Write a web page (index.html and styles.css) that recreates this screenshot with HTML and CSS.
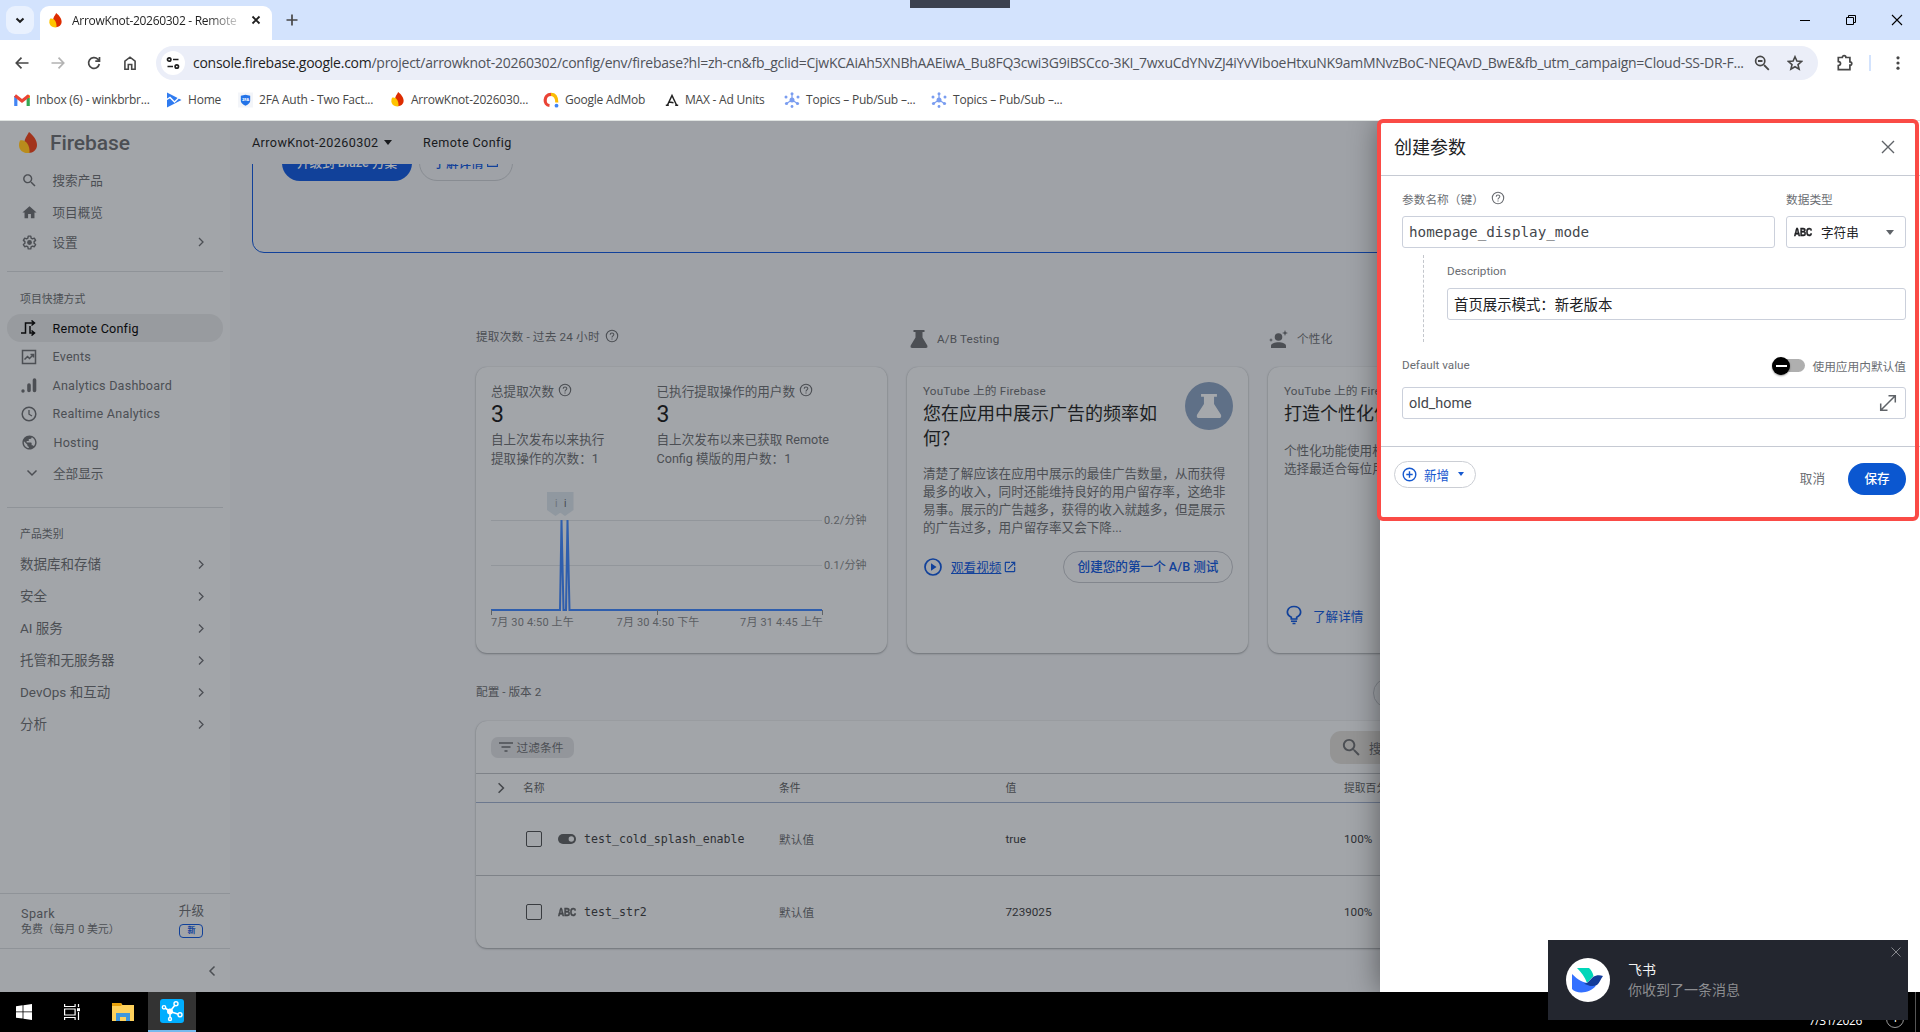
FILE: index.html
```html
<!DOCTYPE html>
<html lang="zh-CN">
<head>
    <meta charset="UTF-8">
    <meta name="viewport" content="width=device-width, initial-scale=1.0">
    <title>ArrowKnot-20260302 - Remote Config</title>
    <link rel="stylesheet" href="styles.css">
</head>
<body>
    <!-- shared icons -->
    <svg class="defs" width="0" height="0">
        <symbol id="flame" viewBox="0 0 18 22">
            <path d="M10 0C14 3.500 18 7.500 18 13c0 4.500-3.700 8-8.500 8C6 19 5 15 5.200 11 5.500 6.500 8 4 10 0Z" fill="var(--flame-b)"/>
            <path d="M1 8.500C6 7 11 12 10.500 20.900 5 22 0 18.500 0 13.500 0 11.500 .3 10 1 8.500Z" fill="var(--flame-a)"/>
        </symbol>
        <symbol id="chevron" viewBox="0 0 10 10">
            <path d="M3 1l4 4-4 4" fill="none" stroke="currentColor" stroke-width="1.300"/>
        </symbol>
        <symbol id="help" viewBox="0 0 14 14">
            <circle cx="7" cy="7" r="5.700" fill="none" stroke="currentColor" stroke-width="1.100"/>
            <path d="M5.200 5.700C5.200 3.500 8.800 3.500 8.800 5.600 8.800 6.800 7 7 7 8.400M7 9.400v1.200" fill="none" stroke="currentColor" stroke-width="1.100"/>
        </symbol>
        <symbol id="search" viewBox="0 0 24 24">
            <path d="M15.500 14h-.79l-.28-.27C15.410 12.590 16 11.110 16 9.500 16 5.910 13.090 3 9.500 3S3 5.910 3 9.500 5.910 16 9.500 16c1.610 0 3.090-.59 4.230-1.570l.27.28v.79l5 4.990L20.490 19l-4.990-5zm-6 0C7.010 14 5 11.990 5 9.500S7.010 5 9.500 5 14 7.010 14 9.500 11.990 14 9.500 14z" fill="currentColor"/>
        </symbol>
        <symbol id="flask" viewBox="0 0 18 18">
            <path d="M3.500 0h11v2h-2v5.500L17.300 15.500Q18 18 15.800 18H2.200Q0 18 .7 15.500L5.500 7.500V2h-2Z" fill="currentColor"/>
        </symbol>
        <symbol id="pubsub" viewBox="0 0 16 16">
            <g fill="#7a9df0"><circle cx="8" cy="8" r="2.500"/><circle cx="8" cy="1.700" r="1.500"/><circle cx="2" cy="5" r="1.500"/><circle cx="14" cy="5" r="1.500"/><circle cx="2.500" cy="11.500" r="1.600"/><circle cx="13.500" cy="11.500" r="1.600"/><circle cx="8" cy="14.500" r="1.400"/></g>
            <path d="M8 8V3M8 8l-5.500 3.500M8 8l5.500 3.500" stroke="#7a9df0" stroke-width="1.200"/>
        </symbol>
    </svg>

    <header class="browser">
        <div class="tabstrip">
            <button class="tab-search"><svg width="10" height="10" viewBox="0 0 10 10"><path d="M1.500 3.500L5 6.800l3.500-3.300" fill="none" stroke="#1f1f1f" stroke-width="2"/></svg></button>
            <div class="tab">
                <svg class="tab-icon" width="13" height="15"><use href="#flame"/></svg>
                <span class="tab-title">ArrowKnot-20260302 - Remote</span>
                <svg width="10" height="10" viewBox="0 0 10 10"><path d="M1.500 1.500l7 7M8.500 1.500l-7 7" stroke="#1f1f1f" stroke-width="1.800"/></svg>
            </div>
            <svg class="new-tab" width="12" height="12" viewBox="0 0 12 12"><path d="M6 .5v11M.5 6h11" stroke="#474747" stroke-width="1.700"/></svg>
            <div class="window-controls">
                <svg width="12" height="12" viewBox="0 0 12 12"><path d="M1 6.500h10" stroke="#000"/></svg>
                <svg width="12" height="12" viewBox="0 0 12 12"><path d="M1.500 3.500h7v7h-7zM3.500 3.500v-2h7v7h-2" fill="none" stroke="#000"/></svg>
                <svg width="12" height="12" viewBox="0 0 12 12"><path d="M1 1l10 10M11 1L1 11" stroke="#000" stroke-width="1.100"/></svg>
            </div>
            <div class="screen-handle"></div>
        </div>
        <div class="toolbar">
            <div class="nav-buttons">
                <svg width="16" height="16" viewBox="0 0 16 16"><path d="M14.500 8H2.500M7.500 2.700L2.300 8l5.200 5.300" fill="none" stroke="#474747" stroke-width="1.700"/></svg>
                <svg width="16" height="16" viewBox="0 0 16 16"><path d="M1.500 8h12M8.500 2.700L13.700 8l-5.200 5.300" fill="none" stroke="#b3b3b3" stroke-width="1.700"/></svg>
                <svg width="16" height="16" viewBox="0 0 16 16"><path d="M13.300 9A5.400 5.400 0 1 1 11.800 4.100L13.300 5.500M13.500 2v4.200H9.300" fill="none" stroke="#474747" stroke-width="1.700"/></svg>
                <svg width="16" height="16" viewBox="0 0 16 16"><path d="M2.900 14.200V6.200L8 2.200l5.100 4v8H9.700V9.500H6.300v4.700Z" fill="none" stroke="#474747" stroke-width="1.600"/></svg>
            </div>
            <div class="omnibox">
                <span class="site-info"><svg width="14" height="14" viewBox="0 0 14 14"><g fill="none" stroke="#1f1f1f" stroke-width="1.700"><circle cx="3.200" cy="3.500" r="1.700"/><path d="M7 3.500h5.500M1.500 10.500H7"/><circle cx="10.800" cy="10.500" r="1.700"/></g></svg></span>
                <span class="url"><b>console.firebase.google.com</b>/project/arrowknot-20260302/config/env/firebase?hl=zh-cn&amp;fb_gclid=CjwKCAiAh5XNBhAAEiwA_Bu8FQ3cwi3G9iBSCco-3KI_7wxuCdYNvZJ4iYvViboeHtxuNK9amMNvzBoC-NEQAvD_BwE&amp;fb_utm_campaign=Cloud-SS-DR-F...</span>
                <span class="omnibox-actions">
                    <svg width="16" height="16" viewBox="0 0 16 16"><path d="M10 10l4.800 4.800M4 6h4.500" stroke="#474747" stroke-width="1.800"/><circle cx="6.200" cy="6" r="4.600" fill="none" stroke="#474747" stroke-width="1.700"/></svg>
                    <svg width="16" height="16" viewBox="0 0 16 16"><path d="M8 1.800l1.900 4.300 4.600.4-3.500 3.100 1.100 4.600L8 11.800l-4.100 2.400L5 9.600 1.500 6.500l4.600-.4Z" fill="none" stroke="#474747" stroke-width="1.600"/></svg>
                </span>
            </div>
            <svg class="extensions" width="18" height="18" viewBox="0 0 18 18"><path d="M2.300 3.500h4c0-2.500 3.600-2.500 3.600 0h4v4.300c2.500 0 2.500 3.400 0 3.400v4.500H2.300v-4.200c3-.3 3-3.600 0-3.900Z" fill="none" stroke="#474747" stroke-width="1.700"/></svg>
            <span class="toolbar-divider"></span>
            <svg width="16" height="16" viewBox="0 0 16 16"><g fill="#474747"><circle cx="8" cy="2.800" r="1.600"/><circle cx="8" cy="8" r="1.600"/><circle cx="8" cy="13.200" r="1.600"/></g></svg>
        </div>
        <nav class="bookmarks">
            <a><svg width="16" height="16" viewBox="0 0 16 16"><path d="M1.800 14V4" stroke="#4285f4" stroke-width="3.200"/><path d="M14.200 14V4" stroke="#34a853" stroke-width="3.200"/><path d="M14.200 6V3" stroke="#fbbc04" stroke-width="3.200"/><path d="M1 3.500l7 5.500 7-5.500" fill="none" stroke="#ea4335" stroke-width="3.200"/></svg>Inbox (6) - winkbrbr...</a>
            <a><svg width="16" height="16" viewBox="0 0 16 16"><path d="M1 .5L15.500 8 1 15.500Z" fill="#2f7bf0"/><path d="M0 8l4-2.500L8.500 10l4-4" fill="none" stroke="#fff" stroke-width="1.400"/></svg>Home</a>
            <a><svg width="15" height="16" viewBox="0 0 16 16"><path d="M0 0h16v16H0z" fill="#f3f5f9"/><path d="M3 3.500l5-1 5 1v5.500c0 2-2 3.700-5 5-3-1.300-5-3-5-5Z" fill="#2373e8"/><text x="8" y="9.500" font-size="4.500" font-weight="bold" text-anchor="middle" fill="#fff">2FA</text></svg>2FA Auth - Two Fact...</a>
            <a><svg width="15" height="15"><use href="#flame"/></svg>ArrowKnot-2026030...</a>
            <a><svg width="16" height="16" viewBox="0 0 16 16"><path d="M6.500 13.500C.5 13 .5 2.500 8 2.300" fill="none" stroke="#ea4335" stroke-width="3.200"/><path d="M8 2.300C12 2.300 13.800 5 13.800 10.500" fill="none" stroke="#fbbc04" stroke-width="3.200"/><circle cx="13.500" cy="13.700" r="1.900" fill="#4285f4"/></svg>Google AdMob</a>
            <a><svg width="14" height="14" viewBox="0 0 14 14"><path d="M2.500 12L7 2.500 11.500 12M4.500 9l4 .8M.8 12.300h3M10.200 12.300h3" fill="none" stroke="#222" stroke-width="1.500"/></svg>MAX - Ad Units</a>
            <a><svg width="16" height="16"><use href="#pubsub"/></svg>Topics – Pub/Sub –...</a>
            <a><svg width="16" height="16"><use href="#pubsub"/></svg>Topics – Pub/Sub –...</a>
        </nav>
    </header>

    <div class="page">
        <aside class="sidebar">
            <div class="brand"><svg width="18" height="22"><use href="#flame"/></svg>Firebase</div>
            <a class="nav-item tall"><svg width="17" height="17"><use href="#search"/></svg><span>搜索产品</span></a>
            <a class="nav-item tall overview"><svg width="17" height="17" viewBox="0 0 24 24"><path d="M10 20v-6h4v6h5v-8h3L12 3 2 12h3v8z" fill="currentColor"/></svg><span>项目概览</span></a>
            <a class="nav-item tall"><svg width="17" height="17" viewBox="0 0 24 24"><path d="M10.200 3h3.600l.5 2.700 1.900 1.100 2.600-.9 1.800 3.100-2.100 1.800v2.300l2.100 1.800-1.800 3.100-2.600-.9-1.900 1.100-.5 2.800h-3.600l-.5-2.800-1.900-1.100-2.600.9-1.800-3.100 2.100-1.800v-2.300L3.400 9l1.800-3.100 2.600.9 1.900-1.100Z" fill="none" stroke="currentColor" stroke-width="2" stroke-linejoin="round"/><circle cx="12" cy="12" r="3.400" fill="currentColor"/></svg><span>设置</span><svg class="more" width="10" height="10"><use href="#chevron"/></svg></a>
            <hr>
            <div class="nav-label">项目快捷方式</div>
            <div class="nav-group">
                <a class="nav-item active"><svg width="16" height="16" viewBox="0 0 16 16"><path d="M0 13h4.500V3H14M10.500 .5L13.500 3l-3 2.500M9 6v7h5M10.500 10.500l3 2.500-3 2.500" fill="none" stroke="currentColor" stroke-width="1.500"/></svg>Remote Config</a>
                <a class="nav-item"><svg width="16" height="16" viewBox="0 0 16 16"><path d="M1.500 1.500h13v13h-13zM3.500 10.500l3-3 2 2 4-4M9.500 5.500h3v3" fill="none" stroke="currentColor" stroke-width="1.500"/></svg>Events</a>
                <a class="nav-item"><svg width="16" height="16" viewBox="0 0 16 16"><circle cx="2" cy="14" r="1.700" fill="currentColor"/><path d="M8 13.500V8M13.500 13.500V3" stroke="currentColor" stroke-width="3.600" stroke-linecap="round"/></svg>Analytics Dashboard</a>
                <a class="nav-item"><svg width="16" height="16" viewBox="0 0 16 16"><circle cx="8" cy="8" r="6.800" fill="none" stroke="currentColor" stroke-width="1.500"/><path d="M8 4v4.200l3 1.800" fill="none" stroke="currentColor" stroke-width="1.300"/></svg>Realtime Analytics</a>
                <a class="nav-item"><svg width="17" height="17" viewBox="0 0 24 24"><path d="M12 2C6.480 2 2 6.480 2 12s4.480 10 10 10 10-4.480 10-10S17.520 2 12 2zm-1 17.930c-3.950-.49-7-3.850-7-7.930 0-.62.08-1.210.21-1.790L9 15v1c0 1.100.9 2 2 2v1.930zm6.900-2.540c-.26-.81-1-1.390-1.900-1.390h-1v-3c0-.55-.45-1-1-1H8v-2h2c.55 0 1-.45 1-1V7h2c1.100 0 2-.9 2-2v-.41c2.930 1.190 5 4.060 5 7.410 0 2.080-.8 3.970-2.100 5.390z" fill="currentColor"/></svg>Hosting</a>
                <a class="nav-item show-all"><svg width="12" height="12" viewBox="0 0 12 12"><path d="M1.500 3.500L6 8l4.500-4.500" fill="none" stroke="currentColor" stroke-width="1.500"/></svg>全部显示</a>
            </div>
            <hr class="second">
            <div class="nav-label products">产品类别</div>
            <div class="categories">
                <a><span>数据库和存储</span><svg width="10" height="11"><use href="#chevron"/></svg></a>
                <a><span>安全</span><svg width="10" height="11"><use href="#chevron"/></svg></a>
                <a><span>AI 服务</span><svg width="10" height="11"><use href="#chevron"/></svg></a>
                <a><span>托管和无服务器</span><svg width="10" height="11"><use href="#chevron"/></svg></a>
                <a><span>DevOps 和互动</span><svg width="10" height="11"><use href="#chevron"/></svg></a>
                <a><span>分析</span><svg width="10" height="11"><use href="#chevron"/></svg></a>
            </div>
            <div class="plan">
                <div><div class="plan-name">Spark</div><div class="plan-price">免费（每月 0 美元）</div></div>
                <div class="upgrade">升级<span class="badge">新</span></div>
            </div>
            <div class="collapse"><svg width="8" height="12" viewBox="0 0 8 12"><path d="M6.500 1.500L2 6l4.500 4.500" fill="none" stroke="currentColor" stroke-width="1.500"/></svg></div>
        </aside>

        <main class="main">
            <div class="topbar">
                <span class="project">ArrowKnot-20260302</span>
                <span class="caret"></span>
                <span class="crumb">Remote Config</span>
            </div>
            <div class="scroll">
                <div class="banner">
                    <a class="pill primary">升级到 Blaze 方案</a>
                    <a class="pill outline">了解详情<svg width="13" height="13" viewBox="0 0 24 24"><path d="M3 3h18v18H3z" fill="none" stroke="currentColor" stroke-width="2"/></svg></a>
                </div>

                <div class="columns headings">
                    <div class="heading first">提取次数 - 过去 24 小时<svg width="14" height="14"><use href="#help"/></svg></div>
                    <div class="heading"><svg width="18" height="18"><use href="#flask"/></svg>A/B Testing</div>
                    <div class="heading"><svg width="19" height="18" viewBox="0 0 19 18"><circle cx="9.500" cy="7" r="3.800" fill="currentColor"/><path d="M2 18v-2c0-5 15-5 15 0v2ZM16 0l.8 2.200 2.200.8-2.200.8L16 6l-.8-2.200L13 3l2.200-.8ZM2 8l.6 1.500 1.400.5-1.400.5L2 12l-.6-1.500L0 10l1.400-.5Z" fill="currentColor"/></svg>个性化</div>
                </div>

                <div class="columns">
                    <section class="card fetches">
                        <div class="stats">
                            <div class="stat">
                                <div class="stat-title">总提取次数<svg width="14" height="14"><use href="#help"/></svg></div>
                                <div class="stat-value">3</div>
                                <div class="stat-note">自上次发布以来执行<br>提取操作的次数：1</div>
                            </div>
                            <div class="stat">
                                <div class="stat-title">已执行提取操作的用户数<svg width="14" height="14"><use href="#help"/></svg></div>
                                <div class="stat-value">3</div>
                                <div class="stat-note">自上次发布以来已获取 Remote<br>Config 模版的用户数：1</div>
                            </div>
                        </div>
                        <svg class="chart" width="384" height="140" viewBox="0 0 384 140">
                            <path d="M0 29.500h331M0 74.500h331" stroke="#92969b"/>
                            <path d="M56 1h17v18l-8.500 6L56 19Z" fill="#9098a0"/>
                            <path d="M65.500 1h17v18L74 25l-8.500-6Z" fill="#9098a0"/>
                            <text x="64" y="16" class="flag">i</text>
                            <text x="73" y="16" class="flag dark">i</text>
                            <path d="M0 119h69l1.500-90 2 90h2.500l1.500-90 2 90H331" fill="none" stroke="#2f5ead" stroke-width="2"/>
                            <path d="M.5 119v5M166.500 119v5M331.500 119v5" stroke="#5f6368"/>
                            <text x="333" y="33">0.2/分钟</text>
                            <text x="333" y="78">0.1/分钟</text>
                            <text x="0" y="135">7月 30 4:50 上午</text>
                            <text x="167" y="135" text-anchor="middle">7月 30 4:50 下午</text>
                            <text x="332" y="135" text-anchor="end">7月 31 4:45 上午</text>
                        </svg>
                    </section>
                    <section class="card promo">
                        <div class="promo-top">
                            <div>
                                <div class="eyebrow">YouTube 上的 Firebase</div>
                                <h2>您在应用中展示广告的频率如何？</h2>
                            </div>
                            <span class="promo-icon"><svg width="26" height="24" viewBox="0 0 18 18" preserveAspectRatio="none"><use href="#flask"/></svg></span>
                        </div>
                        <p>清楚了解应该在应用中展示的最佳广告数量，从而获得最多的收入，同时还能维持良好的用户留存率，这绝非易事。展示的广告越多，获得的收入就越多，但是展示的广告过多，用户留存率又会下降...</p>
                        <div class="promo-actions">
                            <a class="video"><svg width="18" height="18" viewBox="0 0 18 18"><circle cx="9" cy="9" r="8" fill="none" stroke="currentColor" stroke-width="1.700"/><path d="M7 5.300L12.500 9 7 12.700Z" fill="currentColor"/></svg><u>观看视频</u><svg class="external" width="14" height="14" viewBox="0 0 24 24"><path d="M19 19H5V5h7V3H5c-1.100 0-2 .9-2 2v14c0 1.100.9 2 2 2h14c1.100 0 2-.9 2-2v-7h-2v7zM14 3v2h3.590l-9.830 9.830 1.410 1.410L19 6.410V10h2V3h-7z" fill="currentColor"/></svg></a>
                            <a class="create">创建您的第一个 A/B 测试</a>
                        </div>
                    </section>
                    <section class="card promo personal">
                        <div class="eyebrow">YouTube 上的 Firebase</div>
                        <h2>打造个性化体</h2>
                        <p>个性化功能使用机<br>选择最适合每位用</p>
                        <a class="learn"><svg width="16" height="20" viewBox="0 0 16 20"><path d="M5.300 14v-1.700C-1.500 8.500 1.500 1.500 8 1.500S17.500 8.500 10.700 12.300V14Z" fill="none" stroke="currentColor" stroke-width="1.700"/><path d="M5 16.300h6M6.500 18.500h3" stroke="currentColor" stroke-width="1.500"/></svg>了解详情</a>
                    </section>
                </div>

                <div class="config-head"><span>配置 - 版本 2</span><span class="history"></span></div>

                <section class="card table">
                    <div class="filters">
                        <span class="chip"><svg width="14" height="10" viewBox="0 0 14 10"><path d="M0 1h14M2.500 5h9M5.500 9h3" stroke="currentColor" stroke-width="1.600"/></svg><span>过滤条件</span></span>
                        <span class="table-search"><svg width="23" height="23"><use href="#search"/></svg>搜索参数</span>
                    </div>
                    <div class="row head">
                        <span class="expand"><svg width="12" height="12"><use href="#chevron"/></svg></span>
                        <span>名称</span><span>条件</span><span>值</span><span>提取百分比</span>
                    </div>
                    <div class="row">
                        <span></span>
                        <span class="param"><i class="checkbox"></i><svg width="18" height="10" viewBox="0 0 18 10"><rect width="18" height="10" rx="5" fill="currentColor"/><circle cx="13.300" cy="5" r="2.700" fill="#a2a5a9"/></svg><code>test_cold_splash_enable</code></span>
                        <span class="muted">默认值</span><span>true</span><span>100%</span>
                    </div>
                    <div class="row">
                        <span></span>
                        <span class="param"><i class="checkbox"></i><b class="abc">ABC</b><code>test_str2</code></span>
                        <span class="muted">默认值</span><span>7239025</span><span>100%</span>
                    </div>
                </section>
            </div>
        </main>

        <aside class="drawer">
            <div class="drawer-head">
                <h1>创建参数</h1>
                <svg width="14" height="16" viewBox="0 0 14 16"><path d="M1 2l12 12M13 2L1 14" stroke="#5f6368" stroke-width="1.400"/></svg>
            </div>
            <div class="drawer-body">
                <div class="name-row">
                    <div class="field">
                        <label>参数名称（键）<svg width="14" height="14"><use href="#help"/></svg></label>
                        <div class="input mono">homepage_display_mode</div>
                    </div>
                    <div class="field">
                        <label>数据类型</label>
                        <div class="input select"><b class="abc">ABC</b><span>字符串</span><i class="caret"></i></div>
                    </div>
                </div>
                <div class="description">
                    <label>Description</label>
                    <div class="input">首页展示模式：新老版本</div>
                </div>
                <div class="default-head">
                    <label>Default value</label>
                    <span class="toggle"><i></i></span>
                    <label>使用应用内默认值</label>
                </div>
                <div class="input default">old_home<svg width="18" height="18" viewBox="0 0 18 18"><path d="M2 16L16 2M9.500 1.700h6.800v6.800M1.700 9.500v6.800h6.800" fill="none" stroke="#5f6368" stroke-width="1.500"/></svg></div>
            </div>
            <div class="drawer-foot">
                <a class="add"><svg width="15" height="15" viewBox="0 0 15 15"><circle cx="7.500" cy="7.500" r="6.300" fill="none" stroke="currentColor" stroke-width="1.400"/><path d="M7.500 4.300v6.400M4.300 7.500h6.400" stroke="currentColor" stroke-width="1.400"/></svg>新增<i class="caret"></i></a>
                <a class="cancel">取消</a>
                <a class="save">保存</a>
            </div>
        </aside>
    </div>

    <footer class="taskbar">
        <span class="task"><svg width="16" height="16" viewBox="0 0 16 16"><path d="M0 2.200L6.600 1.300v6.200H0ZM7.400 1.200L16 0v7.500H7.400ZM0 8.300h6.600v6.300L0 13.700ZM7.400 8.300H16V16l-8.600-1.200Z" fill="#fff"/></svg></span>
        <span class="task"><svg width="17" height="16" viewBox="0 0 17 16"><path d="M.6 0v2.500h10.500V0M.6 5h10.500v6H.6zM.6 16v-2.500h10.500V16M14.500 0v3M14.500 8v8" fill="none" stroke="#fff" stroke-width="1.200"/><path d="M13 4.200h3v3h-3z" fill="#fff"/></svg></span>
        <span class="task explorer"><svg width="22" height="18" viewBox="0 0 22 18"><path d="M0 0h9l1.500 2H22v16H0Z" fill="#fed15c"/><path d="M0 0h9l1 1.800L9 3H0Z" fill="#e8a20c"/><path d="M4 18v-8h14v8h-4v-4H8v4Z" fill="#3f97dc"/></svg></span>
        <span class="task current"><svg width="24" height="24" viewBox="0 0 24 24"><rect width="24" height="24" rx="3" fill="#00aeff"/><path d="M10 12.500L4.500 8.500M10 12.500L15.800 5M10 12.500l10 3.200M10 12.500V20" stroke="#fff" stroke-width="1.600"/><g fill="#00aeff" stroke="#fff" stroke-width="1.400"><circle cx="4" cy="8.300" r="1.700"/><circle cx="16" cy="4.800" r="2"/><circle cx="20" cy="15.800" r="2"/><circle cx="10" cy="20" r="1.500"/></g><circle cx="10" cy="12.500" r="3" fill="#fff"/></svg></span>
        <span class="clock">7/31/2026</span>
        <span class="notice">1</span>
        <span class="peek"></span>
    </footer>

    <div class="highlight"></div>
    <div class="toast">
        <span class="avatar"><svg width="32" height="26" viewBox="0 0 32 26"><path d="M5 1h12c2 1.500 4 5 4.500 8L15 16C13 10 9 5 5 1Z" fill="#00d6b9"/><path d="M0 7c6 6 11 8.500 18 9.500l6 2C18 27 4 27 0 22Z" fill="#3370ff"/><path d="M31 9c-3-1-7-1-10 1l-6 6-3 .5C16 19 21 20 25 18c2.500-2 3.500-6 6-9Z" fill="#133c9a"/></svg></span>
        <div>
            <div class="toast-title">飞书</div>
            <div class="toast-text">你收到了一条消息</div>
        </div>
        <svg class="toast-close" width="10" height="10" viewBox="0 0 10 10"><path d="M.5 .5l9 9M9.500 .5l-9 9" stroke="#85878c"/></svg>
    </div>
</body>
</html>
```
FILE: styles.css
```css
* {
    box-sizing: border-box;
}

body {
    --flame-a: #ffc400;
    --flame-b: #dd2c00;
    margin: 0;
    width: 1920px;
    height: 1032px;
    overflow: hidden;
    position: relative;
    font-family: Roboto, "Noto Sans CJK SC", sans-serif;
    font-size: 12.6px;
    background: #fff;
}

svg {
    flex: none;
}

.defs {
    position: absolute;
}

/* browser chrome */
.browser {
    height: 121px;
    font-family: "Open Sans", sans-serif;
    border-bottom: 1px solid #dfe3e1;
    background: #fff;
}

.tabstrip {
    position: relative;
    height: 40px;
    padding-left: 6px;
    display: flex;
    align-items: center;
    background: #d3e3fd;
}

.tab-search {
    width: 28px;
    height: 28px;
    padding: 0;
    border: 0;
    border-radius: 9px;
    background: #e9f1fe;
    display: flex;
    align-items: center;
    justify-content: center;
}

.tab {
    width: 232px;
    height: 34px;
    margin: 6px 0 0 6px;
    padding: 0 11px 6px 9px;
    border-radius: 9px 9px 0 0;
    background: #fff;
    display: flex;
    align-items: center;
}

.tab-icon {
    margin-right: 10px;
}

.tab-title {
    width: 165px;
    margin-right: 14px;
    font-size: 12px;
    letter-spacing: -0.3px;
    white-space: nowrap;
    overflow: hidden;
    background: linear-gradient(90deg, #1f1f1f 82%, #ccc);
    background-clip: text;
    color: transparent;
}

.new-tab {
    margin-left: 14px;
}

.window-controls {
    margin-left: auto;
    padding-right: 17px;
    display: flex;
    gap: 34px;
}

.screen-handle {
    position: absolute;
    left: 910px;
    top: 0;
    width: 100px;
    height: 8px;
    background: #3c4250;
}

.toolbar {
    height: 46px;
    padding: 0 14px;
    display: flex;
    align-items: center;
}

.nav-buttons {
    width: 142px;
    display: flex;
    gap: 20px;
}

.omnibox {
    width: 1662px;
    height: 34px;
    border-radius: 17px;
    background: #ebeef8;
    display: flex;
    align-items: center;
    padding-left: 5px;
}

.site-info {
    width: 24px;
    height: 24px;
    border-radius: 50%;
    background: #fff;
    display: flex;
    align-items: center;
    justify-content: center;
}

.url {
    margin-left: 8px;
    width: 1561px;
    padding-bottom: 1px;
    font-size: 14px;
    letter-spacing: -0.26px;
    white-space: nowrap;
    color: #50535a;
}

.url b {
    font-weight: normal;
    color: #1f1f1f;
}

.omnibox-actions {
    display: flex;
    gap: 17px;
}

.extensions {
    margin-left: 18px;
}

.toolbar-divider {
    width: 2px;
    height: 16px;
    margin: 0 19px 0 15px;
    background: #d3e3fd;
}

.bookmarks {
    height: 27px;
    padding-left: 14px;
    display: grid;
    grid-template-columns: 152px 72px 152px 153px 122px 119px 147px 147px;
    align-items: center;
    font-size: 12px;
    letter-spacing: -0.22px;
    color: #474747;
    white-space: nowrap;
}

.bookmarks a {
    display: flex;
    align-items: center;
    gap: 6px;
}

/* console page, under the scrim */
.page {
    --flame-a: #b98c1c;
    --flame-b: #a2341c;
    position: relative;
    height: 871px;
    display: flex;
    overflow: hidden;
    background: #9fa2a7;
    color: #4c4f54;
}

.sidebar {
    width: 230px;
    height: 871px;
    display: flex;
    flex-direction: column;
    background: #a2a5a9;
}

.sidebar hr {
    width: 216px;
    height: 1px;
    margin: 14px 7px 0;
    border: 0;
    background: #8f9398;
}

.sidebar hr.second {
    margin-top: 20px;
}

.brand {
    height: 44px;
    padding: 0 0 0 19px;
    display: flex;
    align-items: center;
    gap: 13px;
    font-size: 21px;
    font-weight: 500;
    letter-spacing: -0.1px;
}

.nav-item {
    height: 28px;
    margin: 0 7px;
    padding: 0 17px 0 14px;
    border-radius: 14px;
    display: flex;
    align-items: center;
    gap: 15.500px;
    letter-spacing: 0.22px;
}

.nav-item.tall {
    height: 30px;
    gap: 14.500px;
    letter-spacing: 0;
}

.nav-item span,
.categories span,
.chip span {
    padding-bottom: 2px;
}

.nav-item.overview {
    margin-top: 2px;
}

.nav-item .more {
    margin-left: auto;
}

.nav-item.active {
    background: #989b9f;
    color: #0b0c0e;
}

.nav-item.show-all {
    margin-top: 2px;
    padding-left: 19px;
    gap: 15px;
    letter-spacing: 0;
}

.nav-label {
    height: 20px;
    margin: 18px 0 4px 20px;
    line-height: 20px;
    font-size: 10.9px;
}

.nav-label.products {
    margin: 17px 0 3px 20px;
}

.nav-group {
    display: flex;
    flex-direction: column;
    gap: 0.6px;
}

.categories a {
    height: 32.1px;
    padding: 0 24px 0 20px;
    display: flex;
    align-items: center;
    justify-content: space-between;
    font-size: 13.5px;
}

.plan {
    height: 55px;
    margin-top: auto;
    padding: 11px 26px 0 21px;
    border-top: 1px solid #8f9398;
    display: flex;
    justify-content: space-between;
}

.plan-name {
    height: 18px;
    line-height: 18px;
    letter-spacing: 0.4px;
}

.plan-price {
    line-height: 14px;
    font-size: 10.9px;
    white-space: nowrap;
}

.upgrade {
    margin-top: -1px;
    display: flex;
    flex-direction: column;
    align-items: center;
    gap: 7px;
    line-height: 13px;
}

.badge {
    width: 24px;
    height: 14px;
    border: 1px solid #11419a;
    border-radius: 4px;
    line-height: 11px;
    font-size: 8px;
    font-weight: bold;
    text-align: center;
    color: #11419a;
}

.collapse {
    height: 44px;
    padding-right: 14px;
    border-top: 1px solid #8f9398;
    display: flex;
    align-items: center;
    justify-content: flex-end;
}

.main {
    width: 1150px;
    height: 871px;
    display: flex;
    flex-direction: column;
}

.topbar {
    height: 43px;
    padding-left: 22px;
    display: flex;
    align-items: center;
    color: #191b1e;
    letter-spacing: 0.4px;
}

.caret {
    width: 0;
    height: 0;
    border: 4px solid transparent;
    border-top: 5px solid currentColor;
    border-bottom: 0;
}

.topbar .caret {
    margin: 0 29px 0 5.500px;
}

.topbar .crumb {
    padding-left: 2px;
}

.scroll {
    flex: 1;
    overflow: hidden;
}

.banner {
    width: 1200px;
    height: 118px;
    margin: -29px 0 0 22px;
    padding: 9px 29px;
    border: 1px solid #11419a;
    border-radius: 0 0 12px 12px;
    display: flex;
    gap: 7px;
}

.pill {
    height: 36px;
    padding-bottom: 3px;
    border-radius: 18px;
    display: flex;
    align-items: center;
    justify-content: center;
    font-weight: 500;
    white-space: nowrap;
}

.pill.primary {
    width: 130px;
    background: #11419a;
    color: #a9acb0;
}

.pill.outline {
    width: 94px;
    gap: 2px;
    border: 1px solid #888c92;
    color: #11419a;
}

.columns {
    width: 1200px;
    padding-left: 246px;
    display: grid;
    grid-template-columns: 411px 341px 340px;
    gap: 20px;
}

.headings {
    padding-top: 75px;
}

.heading {
    height: 39px;
    padding: 4px 0 0 3px;
    display: flex;
    align-items: flex-start;
    gap: 9px;
    line-height: 16px;
    font-size: 11.7px;
    letter-spacing: 0.15px;
}

.heading.first {
    gap: 5px;
    padding: 1px 0 0;
    letter-spacing: 0.15px;
}

.heading:nth-child(2),
.heading:nth-child(3) {
    line-height: 18px;
    padding-top: 2px;
}

.heading:nth-child(3) {
    padding-left: 1px;
}

.card {
    height: 286px;
    border-radius: 11px;
    background: #a2a5a9;
    box-shadow: 0 1px 2px #6f7378, 0 0 1px #7f8388;
}

.fetches {
    padding: 13px 0 0 15px;
}

.stats {
    display: flex;
    height: 111px;
}

.stat {
    width: 165.500px;
    white-space: nowrap;
}

.stat-title {
    height: 20px;
    display: flex;
    align-items: center;
    gap: 4px;
}

.stat-value {
    height: 27px;
    line-height: 29px;
    font-size: 23px;
    font-weight: 400;
    color: #17191c;
}

.stat-note {
    padding-top: 3px;
    line-height: 19px;
}

.chart {
    display: block;
    font-size: 11px;
    letter-spacing: 0.15px;
    fill: #5a5d62;
}

.chart .flag {
    font-size: 10px;
    fill: #6b7178;
}

.chart .flag.dark {
    fill: #44494f;
}

.promo {
    padding: 14px 15px 0 16px;
}

.promo-top {
    display: flex;
    justify-content: space-between;
}

.eyebrow {
    height: 21px;
    line-height: 20px;
    font-size: 11.7px;
    letter-spacing: 0.2px;
}

.promo h2 {
    margin: 0;
    width: 240px;
    line-height: 24.500px;
    font-size: 18px;
    font-weight: 400;
    color: #1c1e22;
}

.promo-icon {
    width: 48px;
    height: 48px;
    margin-top: 1px;
    border-radius: 50%;
    background: #5f7087;
    color: #a5a8ac;
    display: flex;
    align-items: center;
    justify-content: center;
}

.promo p {
    margin: 14px 0 0;
    width: 305px;
    line-height: 18px;
    white-space: normal;
}

.promo-actions {
    height: 32px;
    margin-top: 14px;
    display: flex;
    align-items: center;
    justify-content: space-between;
    color: #11419a;
}

.video {
    padding-left: 1px;
    display: flex;
    align-items: center;
}

.video u {
    margin: 0 2px 1px 9px;
}

.create {
    width: 170px;
    height: 32px;
    border: 1px solid #82868d;
    border-radius: 16px;
    line-height: 30px;
    text-align: center;
    font-weight: 500;
    white-space: nowrap;
}

.personal h2 {
    height: 25px;
}

.personal p {
    margin-top: 15px;
}

.learn {
    margin-top: 127px;
    padding-left: 2px;
    display: flex;
    align-items: center;
    gap: 11px;
    color: #11419a;
}

.config-head {
    height: 68px;
    padding: 25px 0 0 246px;
    display: flex;
    line-height: 29px;
    font-size: 11.7px;
    white-space: nowrap;
}

.config-head span:first-child {
    width: 68px;
    flex: none;
}

.history {
    flex: none;
    width: 60px;
    height: 30px;
    margin-left: 829px;
    border: 1px solid #82868d;
    border-radius: 15px;
}

.table {
    width: 1200px;
    height: 227px;
    margin-left: 246px;
}

.filters {
    height: 52px;
    padding-left: 15px;
    display: flex;
    align-items: center;
}

.chip {
    width: 83px;
    height: 21px;
    border-radius: 7px;
    display: flex;
    align-items: center;
    justify-content: center;
    gap: 4px;
    padding-right: 3px;
    font-size: 11.7px;
    background: #93969b;
}

.table-search {
    width: 200px;
    height: 33px;
    margin-left: 756px;
    padding-left: 10px;
    border-radius: 11px;
    display: flex;
    align-items: center;
    gap: 6px;
    background: #949494;
}

.row {
    height: 73px;
    border-top: 1px solid #7e8288;
    display: grid;
    grid-template-columns: 47px 256px 226.500px 338.500px 200px;
    align-items: center;
    font-size: 11.7px;
    color: #2e3034;
}

.row.head {
    height: 29px;
    padding-bottom: 2px;
    font-size: 10.8px;
    color: #44474b;
}

.row.head + .row {
    border-top-color: #6c788e;
}

.row.head .expand {
    padding: 4px 0 0 19px;
}

.row .muted {
    padding-bottom: 2px;
    color: #4c4f54;
}

.param {
    display: flex;
    align-items: center;
}

.checkbox {
    width: 16px;
    height: 16px;
    margin: 0 16px 0 3px;
    border: 1px solid #393c40;
    border-radius: 2px;
}

.param svg,
.param .abc {
    width: 18px;
    margin-right: 8px;
    color: #44474b;
}

code,
.mono {
    font-family: "DejaVu Sans Mono", "Liberation Mono", monospace;
}

code {
    font-size: 11.6px;
}

.abc {
    width: 18px;
    font-family: "Liberation Sans", sans-serif;
    font-size: 8.500px;
    line-height: 10px;
    letter-spacing: -0.1px;
    -webkit-text-stroke: 0.4px currentColor;
    transform: scaleY(1.35);
}

/* create parameter drawer */
.drawer {
    width: 540px;
    height: 871px;
    background: #fff;
    color: #6a6d72;
    box-shadow: 0 0 28px rgba(0, 0, 0, 0.45);
}

.drawer-head {
    height: 55px;
    padding: 0 25px 3px 14px;
    border-bottom: 1px solid #c6cad3;
    display: flex;
    align-items: center;
    justify-content: space-between;
}

.drawer h1 {
    margin: 0;
    padding-bottom: 2px;
    font-size: 18px;
    font-weight: 400;
    color: #202124;
}

.drawer-body {
    height: 271px;
    padding: 13px 14px 0 22px;
    border-bottom: 1px solid #c6cad3;
}

.drawer label {
    display: flex;
    align-items: center;
    gap: 7px;
    height: 18px;
    font-size: 11.7px;
}

.name-row {
    display: grid;
    grid-template-columns: 373px 120px;
    gap: 11px;
}

.name-row .input {
    margin-top: 9px;
}

.input {
    height: 32px;
    padding: 0 6px;
    border: 1px solid #cbd0db;
    border-radius: 3px;
    display: flex;
    align-items: center;
    font-size: 14.4px;
    color: #44474c;
}

.input.mono {
    font-size: 14.25px;
}

.input.select {
    padding: 0 11px 0 7px;
    font-size: 12.6px;
    color: #202124;
}

.select span {
    margin: 0 auto 0 9px;
    padding-bottom: 2px;
}

.select .caret {
    color: #5f6368;
}

.description {
    height: 87px;
    margin: 7px 0 0 21px;
    padding: 7px 0 0 23px;
    border-left: 1px dashed #c3c6cc;
}

.description .input {
    margin-top: 8px;
    padding-bottom: 2px;
    color: #202124;
}

.default-head {
    height: 18px;
    margin: 14px 0 13px;
    display: flex;
    align-items: center;
}

.toggle {
    width: 33px;
    height: 13px;
    margin: 1px 7px 0 auto;
    border-radius: 7px;
    background: linear-gradient(90deg, transparent 8px, #afafaf 8px);
    display: flex;
    align-items: center;
}

.toggle i {
    width: 18px;
    height: 18px;
    border-radius: 50%;
    background: linear-gradient(#fff, #fff) center / 11px 2px no-repeat #000;
    box-shadow: 0 1px 2px rgba(0, 0, 0, 0.4);
}

.input.default {
    justify-content: space-between;
    padding-right: 8px;
}

.drawer-foot {
    padding: 14px 14px 0;
    display: flex;
    align-items: flex-start;
}

.add {
    width: 82px;
    height: 27px;
    padding: 0 11px 1px 7px;
    border: 1px solid #cbced4;
    border-radius: 14px;
    display: flex;
    align-items: center;
    gap: 7px;
    color: #1659cf;
}

.add .caret {
    margin-left: auto;
    border-width: 4px 3px 0;
}

.cancel {
    margin: 2px 23px 0 auto;
    line-height: 31px;
}

.save {
    width: 58px;
    height: 32px;
    margin-top: 2px;
    border-radius: 16px;
    line-height: 31px;
    text-align: center;
    font-weight: 500;
    background: #0b57d0;
    color: #fff;
}

.highlight {
    position: absolute;
    left: 1377px;
    top: 119px;
    width: 542px;
    height: 402px;
    border: 4px solid #fa4b46;
    border-radius: 6px;
}

.taskbar {
    height: 40px;
    display: flex;
    background: #000;
    color: #fff;
}

.task {
    width: 48px;
    padding: 0;
    display: flex;
    align-items: center;
    justify-content: center;
}

.task.explorer {
    margin-left: 3px;
}

.task.current {
    margin-left: 1px;
    background: #333;
    border-bottom: 2px solid #76b9ed;
}

.clock {
    margin: 20px 24px 0 auto;
    font-family: "Open Sans", sans-serif;
    font-size: 12px;
    letter-spacing: -0.4px;
    line-height: 18px;
}

.notice {
    width: 18px;
    height: 18px;
    margin: 18px 11px 0 0;
    border: 1px solid #999;
    border-radius: 50%;
    line-height: 16px;
    font-size: 11px;
    text-align: center;
}

.peek {
    width: 5px;
    border-left: 1px solid #555;
}

.toast {
    position: absolute;
    left: 1548px;
    top: 940px;
    width: 360px;
    height: 80px;
    padding-left: 18px;
    display: flex;
    align-items: center;
    gap: 18px;
    background: #23262f;
    font-size: 14px;
    line-height: 20px;
}

.avatar {
    width: 44px;
    height: 44px;
    border-radius: 50%;
    background: #fff;
    display: flex;
    align-items: center;
    justify-content: center;
}

.toast-title {
    color: #f2f2f2;
}

.toast-text {
    color: #8c8d90;
}

.toast-close {
    align-self: flex-start;
    margin: 7px 7px 0 auto;
}
```
